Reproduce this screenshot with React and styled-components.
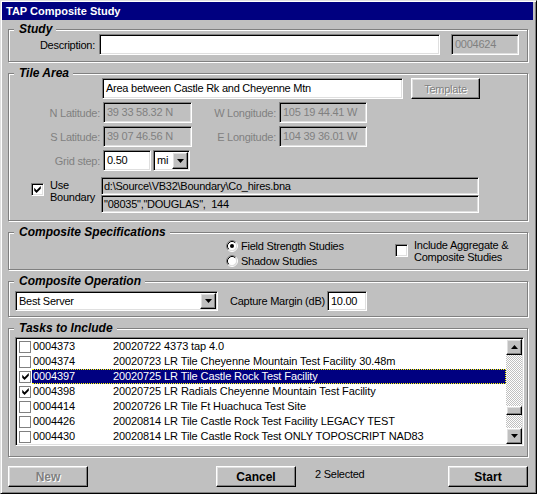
import React from "react";
import styled, { createGlobalStyle, css } from "styled-components";

const GlobalStyle = createGlobalStyle`
  html, body {
    margin: 0;
    padding: 0;
    background: #c0c0c0;
  }
  body {
    font-family: "Liberation Sans", Arial, sans-serif;
    font-size: 11px;
  }
  * {
    box-sizing: border-box;
  }
`;

const sunken = css`
  border: 1px solid;
  border-color: #808080 #fff #fff #808080;
  box-shadow: inset 1px 1px 0 #000, inset -1px -1px 0 #dfdfdf;
`;

const raised = css`
  border: 1px solid;
  border-color: #fff #000 #000 #fff;
  box-shadow: inset -1px -1px 0 #808080, inset 1px 1px 0 #dfdfdf;
`;

const Window = styled.div`
  width: 537px;
  height: 494px;
  background: #c0c0c0;
  border: 1px solid;
  border-color: #dfdfdf #000 #000 #dfdfdf;
  box-shadow: inset 1px 1px 0 #fff, inset -1px -1px 0 #808080;
  padding: 1px 3px 3px 1px;
  display: flex;
  flex-direction: column;
  color: #000;
  letter-spacing: -0.25px;
`;

const TitleBar = styled.div`
  height: 18px;
  background: #000080;
  color: #fff;
  font-weight: bold;
  font-size: 11px;
  line-height: 18px;
  padding-left: 4px;
  letter-spacing: 0;
`;

const Body = styled.div`
  flex: 1;
  display: flex;
  flex-direction: column;
  gap: 11px;
  padding: 9px 5px 0 6px;
`;

const Group = styled.div`
  border: 1px solid #808080;
  box-shadow: 1px 1px 0 #fff, inset 1px 1px 0 #fff;
`;

const Legend = styled.div`
  width: fit-content;
  height: 14px;
  margin: -8px 0 -6px 5px;
  padding: 0 4px 0 5px;
  line-height: 14px;
  background: #c0c0c0;
  font-size: 12px;
  font-weight: bold;
  font-style: italic;
  letter-spacing: 0;
`;

const Content = styled.div`
  display: flex;
  flex-direction: ${(p) => (p.$row ? "row" : "column")};
  gap: ${(p) => p.$gap || 0}px;
  padding: ${(p) => p.$pad};
`;

const Row = styled.div`
  display: flex;
  align-items: ${(p) => p.$align || "center"};
  height: ${(p) => p.$h || 21}px;
  margin-top: ${(p) => p.$mt || 0}px;
`;

const Label = styled.span`
  flex: none;
  width: ${(p) => (p.$w ? `${p.$w}px` : "auto")};
  margin-left: ${(p) => p.$ml || 0}px;
  margin-right: ${(p) => p.$mr ?? 3}px;
  text-align: right;
  white-space: nowrap;
  color: ${(p) => (p.$dim ? "#808080" : "#000")};
`;

const Field = styled.div`
  ${sunken};
  flex: none;
  width: ${(p) => p.$w}px;
  height: ${(p) => p.$h || 21}px;
  margin-left: ${(p) => p.$ml || 0}px;
  padding: 0 3px;
  line-height: ${(p) => (p.$h || 21) - 2}px;
  white-space: pre;
  overflow: hidden;
  background: ${(p) => (p.$disabled ? "#c0c0c0" : "#fff")};
  color: ${(p) => (p.$disabled ? "#808080" : "#000")};
`;

const Button = styled.button`
  ${raised};
  flex: none;
  width: ${(p) => p.$w}px;
  height: 21px;
  margin-left: ${(p) => p.$ml || 0}px;
  padding: 0;
  background: #c0c0c0;
  font-family: inherit;
  font-size: ${(p) => (p.$bold ? 12 : 11)}px;
  font-weight: ${(p) => (p.$bold ? "bold" : "normal")};
  letter-spacing: ${(p) => (p.$bold ? 0 : -0.25)}px;
  color: ${(p) => (p.disabled ? "#808080" : "#000")};
  text-shadow: ${(p) => (p.disabled ? "1px 1px 0 #fff" : "none")};
`;

const Combo = styled.div`
  ${sunken};
  flex: none;
  display: flex;
  align-items: stretch;
  width: ${(p) => p.$w}px;
  height: ${(p) => p.$h || 21}px;
  margin-left: ${(p) => p.$ml || 0}px;
  padding: 1px;
  background: #fff;
`;

const ComboText = styled.span`
  flex: 1;
  padding-left: 2px;
  line-height: ${(p) => (p.$h || 21) - 4}px;
  white-space: nowrap;
`;

const ArrowButton = styled.div`
  ${raised};
  flex: none;
  width: 16px;
  display: flex;
  align-items: center;
  justify-content: center;
  background: #c0c0c0;
`;

const CheckBox = styled.span`
  ${sunken};
  flex: none;
  display: inline-flex;
  align-items: center;
  justify-content: center;
  width: 13px;
  height: 13px;
  margin-top: ${(p) => p.$mt || 0}px;
  margin-left: ${(p) => p.$ml || 0}px;
  background: #fff;
`;

const CheckText = styled.span`
  flex: none;
  width: ${(p) => (p.$w ? `${p.$w}px` : "auto")};
  margin-left: 6px;
  margin-top: ${(p) => p.$mt || 0}px;
  line-height: 12px;
`;

const BoundaryBox = styled.div`
  display: flex;
  flex-direction: column;
  width: 378px;
`;

const BoundaryLine = styled.div`
  ${sunken};
  height: 18px;
  padding: 0 2px;
  line-height: 16px;
  white-space: pre;
  background: #c0c0c0;
`;

const RadioCol = styled.div`
  display: flex;
  flex-direction: column;
  width: 169px;
`;

const RadioItem = styled.div`
  display: flex;
  align-items: center;
  gap: 3px;
  height: 15px;
`;

const Option = styled.div`
  display: flex;
  align-items: flex-start;
`;

const ListBox = styled.div`
  ${sunken};
  display: flex;
  height: 109px;
  padding: 1px;
  background: #fff;
`;

const Items = styled.div`
  flex: 1;
  display: flex;
  flex-direction: column;
  letter-spacing: -0.1px;
`;

const ItemRow = styled.div`
  display: flex;
  align-items: center;
  height: 15px;
`;

const ListCheck = styled.span`
  flex: none;
  display: inline-flex;
  align-items: center;
  justify-content: center;
  width: 12px;
  height: 12px;
  margin: 0 1px 0 2px;
  border: 1px solid #808080;
  background: #fff;
`;

const ItemText = styled.div`
  flex: 1;
  display: flex;
  height: 15px;
  padding-left: 1px;
  line-height: 13px;
  white-space: nowrap;
  border: 1px dotted ${(p) => (p.$selected ? "#ffff00" : "transparent")};
  border-left-width: 0;
  background: ${(p) => (p.$selected ? "#000080" : "transparent")};
  color: ${(p) => (p.$selected ? "#fff" : "#000")};
`;

const IdCol = styled.span`
  width: 80px;
  flex: none;
`;

const ScrollBar = styled.div`
  flex: none;
  width: 16px;
  display: flex;
  flex-direction: column;
`;

const ScrollButton = styled.div`
  ${raised};
  flex: none;
  height: 16px;
  display: flex;
  align-items: center;
  justify-content: center;
  background: #c0c0c0;
`;

const Track = styled.div`
  flex: 1;
  background-color: #fff;
  background-image: repeating-conic-gradient(#c0c0c0 0 25%, #fff 0 50%);
  background-size: 2px 2px;
`;

const Thumb = styled.div`
  ${raised};
  height: 9px;
  margin-top: ${(p) => p.$offset}px;
  background: #c0c0c0;
`;

const Footer = styled.div`
  display: flex;
  align-items: flex-start;
  height: 21px;
  margin-top: -2px;
`;

const Status = styled.span`
  flex: 1;
  margin-left: 19px;
  padding-top: 1px;
  line-height: 14px;
`;

const Radio = ({ checked }) => (
  <svg width="12" height="12" viewBox="0 0 12 12">
    <circle cx="6" cy="6" r="4.5" fill="#fff" />
    <path d="M2.11 9.89A5.5 5.5 0 0 1 9.89 2.11" fill="none" stroke="#808080" />
    <path d="M9.89 2.11A5.5 5.5 0 0 1 2.11 9.89" fill="none" stroke="#fff" />
    <path d="M2.82 9.18A4.5 4.5 0 0 1 9.18 2.82" fill="none" stroke="#000" />
    <path d="M9.18 2.82A4.5 4.5 0 0 1 2.82 9.18" fill="none" stroke="#dfdfdf" />
    {checked && <circle cx="6" cy="6" r="2" fill="#000" />}
  </svg>
);

const Tick = ({ size = 7 }) => (
  <svg width={size} height={size} viewBox="0 0 7 7.5">
    <path d="M0 2L2.5 4.5L7 0V3L2.5 7.5L0 5Z" fill="#000" />
  </svg>
);

const Arrow = ({ up }) => (
  <svg width="7" height="4" viewBox="0 0 7 4">
    <path d={up ? "M3.5 0L7 4H0Z" : "M0 0H7L3.5 4Z"} fill="#000" />
  </svg>
);

const tasks = [
  { id: "0004373", text: "20020722 4373 tap 4.0" },
  { id: "0004374", text: "20020723 LR Tile Cheyenne Mountain Test Facility 30.48m" },
  { id: "0004397", text: "20020725 LR Tile Castle Rock Test Facility", checked: true, selected: true },
  { id: "0004398", text: "20020725 LR Radials Cheyenne Mountain Test Facility", checked: true },
  { id: "0004414", text: "20020726 LR Tile Ft Huachuca Test Site" },
  { id: "0004426", text: "20020814 LR Tile Castle Rock Test Facility LEGACY TEST" },
  { id: "0004430", text: "20020814 LR Tile Castle Rock Test ONLY TOPOSCRIPT NAD83" },
];

const App = () => {
  const selectedCount = tasks.filter((t) => t.checked).length;

  return (
    <Window>
      <GlobalStyle />
      <TitleBar>TAP Composite Study</TitleBar>

      <Body>
        <Group>
          <Legend>Study</Legend>
          <Content $pad="4px 0 6px 0">
            <Row>
              <Label $w={86} $mr={4}>Description:</Label>
              <Field $w={341} />
              <Field $w={68} $ml={11} $disabled>0004624</Field>
            </Row>
          </Content>
        </Group>

        <Group>
          <Legend>Tile Area</Legend>
          <Content $pad="4px 0 7px 0" $gap={3}>
            <Row>
              <Field $w={301} $ml={93}>Area between Castle Rk and Cheyenne Mtn</Field>
              <Button $w={69} $ml={8} disabled>Template</Button>
            </Row>
            <Row>
              <Label $w={91} $dim>N Latitude:</Label>
              <Field $w={89} $disabled>39 33 58.32 N</Field>
              <Label $w={84} $dim>W Longitude:</Label>
              <Field $w={88} $disabled>105 19 44.41 W</Field>
            </Row>
            <Row>
              <Label $w={91} $dim>S Latitude:</Label>
              <Field $w={89} $disabled>39 07 46.56 N</Field>
              <Label $w={84} $dim>E Longitude:</Label>
              <Field $w={88} $disabled>104 39 36.01 W</Field>
            </Row>
            <Row>
              <Label $w={91} $dim>Grid step:</Label>
              <Field $w={48}>0.50</Field>
              <Combo $w={37} $ml={2}>
                <ComboText>mi</ComboText>
                <ArrowButton>
                  <Arrow />
                </ArrowButton>
              </Combo>
            </Row>
            <Row $h={36} $mt={3} $align="flex-start">
              <CheckBox $ml={22} $mt={6}>
                <Tick />
              </CheckBox>
              <CheckText $w={51} $mt={2}>
                Use
                <br />
                Boundary
              </CheckText>
              <BoundaryBox>
                <BoundaryLine>{"d:\\Source\\VB32\\Boundary\\Co_hires.bna"}</BoundaryLine>
                <BoundaryLine>{'"08035","DOUGLAS",  144'}</BoundaryLine>
              </BoundaryBox>
            </Row>
          </Content>
        </Group>

        <Group>
          <Legend>Composite Specifications</Legend>
          <Content $row $pad="5px 0 1px 217px">
            <RadioCol>
              <RadioItem>
                <Radio checked />
                Field Strength Studies
              </RadioItem>
              <RadioItem>
                <Radio />
                Shadow Studies
              </RadioItem>
            </RadioCol>
            <Option>
              <CheckBox $mt={6} />
              <CheckText $mt={1}>
                Include Aggregate &amp;
                <br />
                Composite Studies
              </CheckText>
            </Option>
          </Content>
        </Group>

        <Group>
          <Legend>Composite Operation</Legend>
          <Content $pad="9px 0 5px 6px">
            <Row $h={20}>
              <Combo $w={203} $h={20}>
                <ComboText $h={20}>Best Server</ComboText>
                <ArrowButton>
                  <Arrow />
                </ArrowButton>
              </Combo>
              <Label $ml={12} $mr={2}>Capture Margin (dB)</Label>
              <Field $w={40} $h={20}>10.00</Field>
            </Row>
          </Content>
        </Group>

        <Group>
          <Legend>Tasks to Include</Legend>
          <Content $pad="8px 3px 10px 6px">
            <ListBox>
              <Items>
                {tasks.map((t) => (
                  <ItemRow key={t.id}>
                    <ListCheck>{t.checked && <Tick size={7} />}</ListCheck>
                    <ItemText $selected={t.selected}>
                      <IdCol>{t.id}</IdCol>
                      {t.text}
                    </ItemText>
                  </ItemRow>
                ))}
              </Items>
              <ScrollBar>
                <ScrollButton>
                  <Arrow up />
                </ScrollButton>
                <Track>
                  <Thumb $offset={51} />
                </Track>
                <ScrollButton>
                  <Arrow />
                </ScrollButton>
              </ScrollBar>
            </ListBox>
          </Content>
        </Group>

        <Footer>
          <Button $w={80} $bold disabled>New</Button>
          <Button $w={80} $ml={128} $bold>Cancel</Button>
          <Status>{selectedCount} Selected</Status>
          <Button $w={80} $bold>Start</Button>
        </Footer>
      </Body>
    </Window>
  );
};

export default App;
